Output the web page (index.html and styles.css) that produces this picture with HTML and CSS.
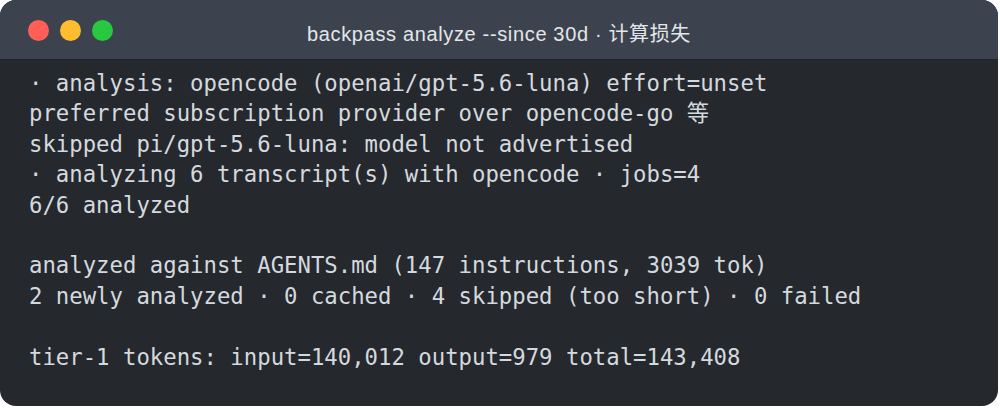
FILE: index.html
```html
<!DOCTYPE html>
<html lang="en">
<head>
<meta charset="utf-8">
<link rel="stylesheet" href="styles.css">
</head>
<body>
<div class="window">
  <div class="titlebar">
    <div class="lights">
      <span class="light red"></span>
      <span class="light yellow"></span>
      <span class="light green"></span>
    </div>
    <div class="title">backpass analyze --since 30d · 计算损失</div>
  </div>
  <pre class="term">· analysis: opencode (openai/gpt-5.6-luna) effort=unset
preferred subscription provider over opencode-go 等
skipped pi/gpt-5.6-luna: model not advertised
· analyzing 6 transcript(s) with opencode · jobs=4
6/6 analyzed

analyzed against AGENTS.md (147 instructions, 3039 tok)
2 newly analyzed · 0 cached · 4 skipped (too short) · 0 failed

tier-1 tokens: input=140,012 output=979 total=143,408</pre>
</div>
</body>
</html>
```
FILE: styles.css
```css
html, body {
  margin: 0;
  padding: 0;
  background: #ffffff;
}
.window {
  width: 998px;
  height: 406px;
  border-radius: 16px;
  overflow: hidden;
  background: #25292e;
  display: flex;
  flex-direction: column;
}
.titlebar {
  height: 60px;
  flex: none;
  background: #3c434e;
  border-bottom: 1px solid #1f2328;
  box-sizing: border-box;
  position: relative;
  display: flex;
  align-items: center;
}
.lights {
  display: flex;
  gap: 11px;
  padding-left: 28px;
  margin-top: 1px;
}
.light {
  width: 21px;
  height: 21px;
  border-radius: 50%;
  display: block;
}
.red { background: #ff5f57; }
.yellow { background: #febc2e; }
.green { background: #28c840; }
.title {
  position: absolute;
  left: 0;
  right: 0;
  top: 0;
  bottom: 0;
  display: flex;
  align-items: center;
  justify-content: center;
  font-family: "Liberation Sans", "Noto Sans CJK SC", sans-serif;
  font-size: 20px;
  letter-spacing: 0.65px;
  color: #e3e6ea;
  padding-top: 6px;
  box-sizing: border-box;
}
.term {
  margin: 0;
  padding: 8px 29px;
  font-family: "DejaVu Sans Mono", "Noto Sans CJK SC", monospace;
  font-size: 22.3px;
  line-height: 30.4px;
  color: #d4d9df;
  white-space: pre;
}
```
